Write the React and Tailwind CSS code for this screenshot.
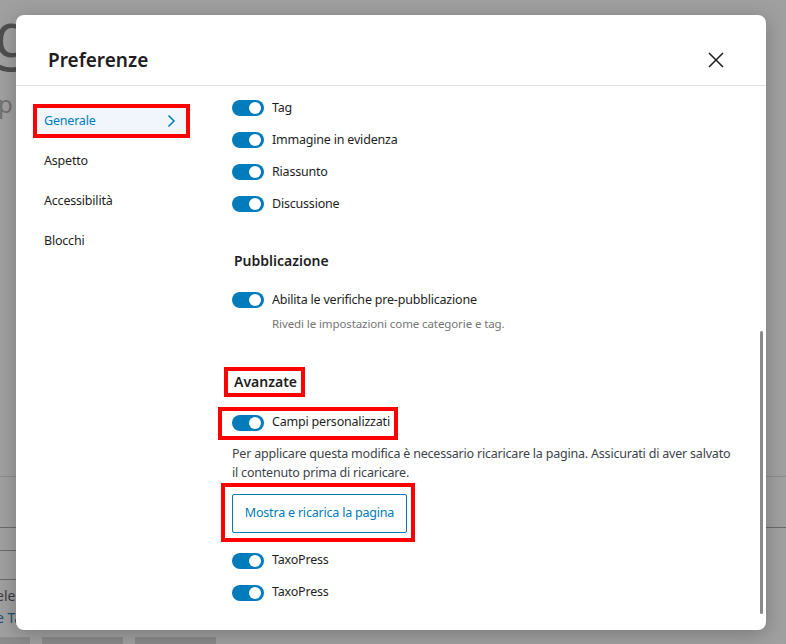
import React from 'react';

const font = { fontFamily: '"Noto Sans", "Liberation Sans", sans-serif' };

const Toggle = () => (
  <span className="relative inline-flex h-[16px] w-[32px] shrink-0 items-center rounded-full bg-[#007cba]">
    <span className="absolute right-[3px] h-[12px] w-[12px] rounded-full bg-white" />
  </span>
);

const ToggleRow = ({ label }) => (
  <div className="flex h-[32px] items-center gap-[8px]">
    <Toggle />
    <span className="text-[12.5px] tracking-[-0.2px] text-[#1e1e1e]">{label}</span>
  </div>
);

const Annot = ({ className }) => (
  <span className={'pointer-events-none absolute border-4 border-[#ff0000] ' + className} />
);

// the editor page behind the dimmed overlay
const Background = () => (
  <div className="flex h-full w-full flex-col overflow-hidden bg-[#a0a0a0]">
    <div className="ml-[-6px] mt-[2px] h-[90px] text-[62px] leading-none text-[#4f4f4f]">g</div>
    <div className="ml-[-2px] h-[384px] text-[24px] leading-none text-[#707070]">p</div>
    <div className="h-[51px] border-t border-[#8c8c8c]" />
    <div className="h-[23px] border-t border-[#6a6a6a]" />
    <div className="h-[29px] w-[20px] border-t border-[#6a6a6a]" />
    <div className="w-[20px] border-t border-[#6a6a6a]" />
    <div className="ml-[-4px] mt-[6px] text-[14px] leading-[20px] text-[#3c3c3c]">ele</div>
    <div className="ml-[-4px] mt-[2px] text-[14px] leading-[20px] text-[#23506e]">e Ta</div>
    <div className="mt-auto flex h-[7px] gap-[12px]">
      <div className="w-[30px] bg-[#8c8c8c]" />
      <div className="w-[81px] bg-[#8a8a8a]" />
      <div className="w-[81px] bg-[#8a8a8a]" />
    </div>
  </div>
);

const navItems = ['Aspetto', 'Accessibilità', 'Blocchi'];

export default function App() {
  return (
    <div className="relative h-[644px] w-[786px] overflow-hidden" style={font}>
      <Background />

      <div className="absolute left-[16px] top-[15px] flex h-[615px] w-[750px] flex-col overflow-hidden rounded-[8px] bg-white shadow-[0_4px_20px_rgba(0,0,0,0.25)]">
        <div className="flex h-[71px] shrink-0 items-center justify-between border-b border-[#e0e0e0] pl-[32px] pr-[38px] pt-[20px]">
          <h1 className="text-[19px] font-semibold text-[#1e1e1e]">Preferenze</h1>
          <svg width="24" height="24" viewBox="0 0 24 24" className="text-[#1e1e1e]">
            <path d="M5 5 L19 19 M19 5 L5 19" stroke="currentColor" strokeWidth="1.5" fill="none" />
          </svg>
        </div>

        <div className="flex min-h-0 flex-1">
          <nav className="flex w-[216px] shrink-0 flex-col gap-[6px] pl-[17px] pt-[18px]">
            <div className="flex h-[34px] w-[157px] items-center justify-between border-4 border-[#ff0000] bg-[#f0f6fc] pl-[7px] pr-[10px] text-[12.5px] tracking-[-0.2px] text-[#007cba]">
              <span>Generale</span>
              <svg width="10" height="14" viewBox="0 0 10 14">
                <path d="M2.5 1.5 L8 7 L2.5 12.5" stroke="currentColor" strokeWidth="1.5" fill="none" />
              </svg>
            </div>
            {navItems.map((item) => (
              <div key={item} className="flex h-[34px] items-center pl-[11px] text-[12.5px] tracking-[-0.2px] text-[#1e1e1e]">
                {item}
              </div>
            ))}
          </nav>

          <div className="relative min-w-0 flex-1 pr-[34px] pt-[6px]">
            <ToggleRow label="Tag" />
            <ToggleRow label="Immagine in evidenza" />
            <ToggleRow label="Riassunto" />
            <ToggleRow label="Discussione" />

            <div className="ml-[2px] mt-[30px] flex h-[20px] items-center text-[14px] font-semibold text-[#1e1e1e]">
              Pubblicazione
            </div>
            <div className="mt-[14px]">
              <ToggleRow label="Abilita le verifiche pre-pubblicazione" />
            </div>
            <p className="ml-[40px] text-[11.5px] leading-[16px] tracking-[-0.1px] text-[#757575]">
              Rivedi le impostazioni come categorie e tag.
            </p>

            <div className="relative ml-[2px] mt-[39px] inline-flex h-[20px] items-center text-[14px] font-semibold text-[#1e1e1e]">
              Avanzate
              <Annot className="-bottom-[6px] -left-[10px] -right-[8px] -top-[4px]" />
            </div>
            <div className="mt-[14px]">
              <div className="relative inline-flex">
                <ToggleRow label="Campi personalizzati" />
                <Annot className="-bottom-[1px] -left-[14px] -right-[8px] top-0" />
              </div>
            </div>
            <p className="mt-[5px] text-[12.5px] leading-[19px] tracking-[-0.2px] text-[#3c434a]">
              Per applicare questa modifica è necessario ricaricare la pagina. Assicurati di aver salvato il contenuto prima di ricaricare.
            </p>
            <div className="mt-[12px]">
              <div className="relative inline-flex">
                <button className="flex h-[39px] w-[175px] items-center justify-center rounded-[2px] border border-[#007cba] text-[12.5px] tracking-[-0.2px] text-[#007cba]">
                  Mostra e ricarica la pagina
                </button>
                <Annot className="-bottom-[9px] -left-[11px] -right-[8px] -top-[11px]" />
              </div>
            </div>
            <div className="mt-[12px]">
              <ToggleRow label="TaxoPress" />
              <ToggleRow label="TaxoPress" />
            </div>

            <div className="absolute bottom-[16px] right-[3px] top-[245px] w-[3px] rounded-full bg-[#8a8a8a]" />
          </div>
        </div>
      </div>
    </div>
  );
}
